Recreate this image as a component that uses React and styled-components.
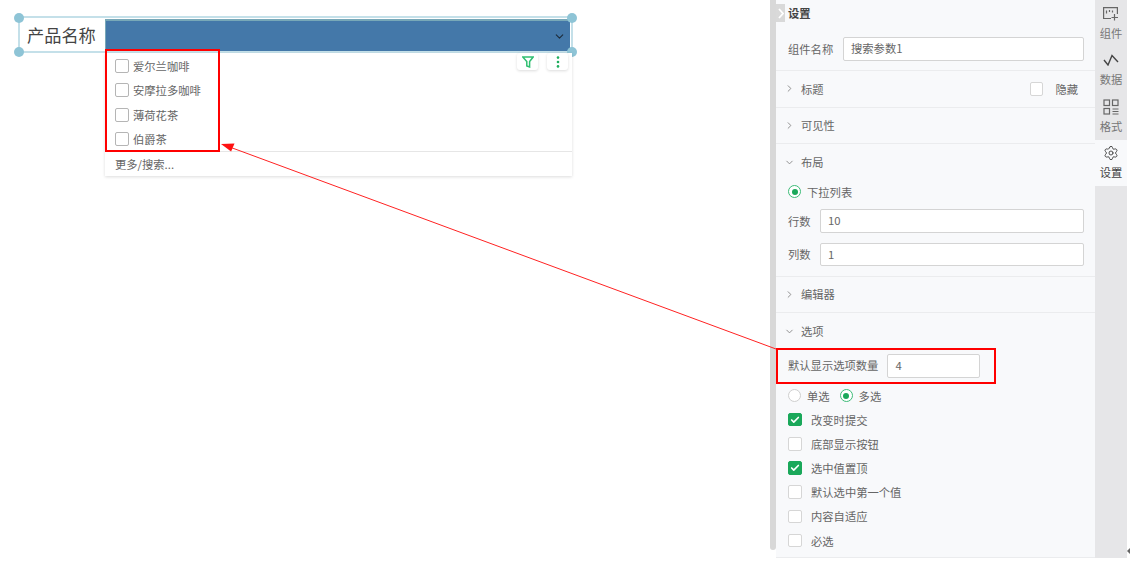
import React from "react";
import styled, { createGlobalStyle } from "styled-components";
import { Check, ChevronDown, ChevronRight, Settings } from "lucide-react";

const options = ["爱尔兰咖啡", "安摩拉多咖啡", "薄荷花茶", "伯爵茶"];

const checks = [
    { label: "改变时提交", checked: true },
    { label: "底部显示按钮", checked: false },
    { label: "选中值置顶", checked: true },
    { label: "默认选中第一个值", checked: false },
    { label: "内容自适应", checked: false },
    { label: "必选", checked: false },
];

const App = () => {
    return (
        <Page>
            <GlobalStyle />
            <Canvas>
                <Frame>
                    <Handle $x="left" $y="top" />
                    <Handle $x="right" $y="top" />
                    <Handle $x="left" $y="bottom" />
                    <Handle $x="right" $y="bottom" />
                    <WidgetLabel>产品名称</WidgetLabel>
                    <SelectBar>
                        <ChevronDown size={13} strokeWidth={2} color="#1d2b3a" />
                    </SelectBar>
                </Frame>
                <Dropdown>
                    <FloatTools>
                        <ToolButton>
                            <svg width="12" height="12" viewBox="0 0 12 12" fill="none" stroke="#2fbf71" strokeWidth="1.5">
                                <path d="M.8 1h10.4L7.6 5.6V11L4.8 10V5.6L.8 1z" />
                            </svg>
                        </ToolButton>
                        <ToolButton>
                            <svg width="4" height="12" viewBox="0 0 4 12" fill="#1fae5e">
                                <circle cx="2" cy="1.6" r="1.3" />
                                <circle cx="2" cy="6" r="1.3" />
                                <circle cx="2" cy="10.4" r="1.3" />
                            </svg>
                        </ToolButton>
                    </FloatTools>
                    <OptionList>
                        {options.map((option) => (
                            <OptionRow key={option}>
                                <OptionBox />
                                {option}
                            </OptionRow>
                        ))}
                    </OptionList>
                    <MoreRow>更多/搜索...</MoreRow>
                </Dropdown>
            </Canvas>

            <Panel>
                <ScrollTrack />
                <PanelBody>
                    <CollapseTab>
                        <svg width="6" height="11" viewBox="0 0 6 11" fill="none" stroke="#fff" strokeWidth="1.8">
                            <path d="M1 1l4 4.5L1 10" />
                        </svg>
                    </CollapseTab>
                    <NameSection>
                        <PanelTitle>设置</PanelTitle>
                        <FieldRow>
                            <span>组件名称</span>
                            <TextBox $width="241px">搜索参数1</TextBox>
                        </FieldRow>
                    </NameSection>
                    <FoldRow>
                        <ChevronRight size={11} color="#888" />
                        <FoldLabel>标题</FoldLabel>
                        <HideCheck>
                            <CheckBox />
                            隐藏
                        </HideCheck>
                    </FoldRow>
                    <FoldRow>
                        <ChevronRight size={11} color="#888" />
                        <FoldLabel>可见性</FoldLabel>
                    </FoldRow>
                    <OpenSection $bottom="9.5px">
                        <OpenHeader>
                            <ChevronDown size={11} color="#888" />
                            <FoldLabel>布局</FoldLabel>
                        </OpenHeader>
                        <RadioRow>
                            <RadioItem>
                                <Radio $on />
                                下拉列表
                            </RadioItem>
                        </RadioRow>
                        <FieldStack>
                            <FieldRow>
                                <span>行数</span>
                                <TextBox $width="264px">10</TextBox>
                            </FieldRow>
                            <FieldRow>
                                <span>列数</span>
                                <TextBox $width="264px">1</TextBox>
                            </FieldRow>
                        </FieldStack>
                    </OpenSection>
                    <FoldRow>
                        <ChevronRight size={11} color="#888" />
                        <FoldLabel>编辑器</FoldLabel>
                    </FoldRow>
                    <OpenSection $bottom="4.5px">
                        <OpenHeader>
                            <ChevronDown size={11} color="#888" />
                            <FoldLabel>选项</FoldLabel>
                        </OpenHeader>
                        <CountRow>
                            <span>默认显示选项数量</span>
                            <TextBox $width="93px">4</TextBox>
                        </CountRow>
                        <RadioRow>
                            <RadioItem>
                                <Radio />
                                单选
                            </RadioItem>
                            <RadioItem>
                                <Radio $on />
                                多选
                            </RadioItem>
                        </RadioRow>
                        {checks.map((item) => (
                            <CheckRow key={item.label}>
                                <CheckBox $on={item.checked}>
                                    {item.checked && <Check size={10} strokeWidth={4} color="#fff" />}
                                </CheckBox>
                                {item.label}
                            </CheckRow>
                        ))}
                    </OpenSection>
                </PanelBody>
                <Rail>
                    <RailTab>
                        <RailIcon>
                            <svg width="16" height="14" viewBox="0 0 16 14" fill="none" stroke="#666" strokeWidth="1.2">
                                <path d="M8 11.5H.6V.6h13.8V7" />
                                <path d="M3.5 3.5v3M6.5 3v2M9.5 3.5v2" />
                                <path d="M11.5 7v6.5M8.5 10.5h6.5" />
                            </svg>
                        </RailIcon>
                        <span>组件</span>
                    </RailTab>
                    <RailTab>
                        <RailIcon>
                            <svg width="16" height="12" viewBox="0 0 16 12" fill="none" stroke="#444" strokeWidth="1.4">
                                <path d="M1 6l4 5L9 1.5 15 8" />
                            </svg>
                        </RailIcon>
                        <span>数据</span>
                    </RailTab>
                    <RailTab>
                        <RailIcon>
                            <svg width="16" height="16" viewBox="0 0 16 16" fill="none" stroke="#666" strokeWidth="1.2">
                                <rect x="1" y="1" width="5.5" height="5.5" />
                                <rect x="9.5" y="1" width="5.5" height="5.5" />
                                <rect x="1" y="9.5" width="5.5" height="5.5" />
                                <path d="M9.5 10h6M9.5 12.5h6M9.5 15h6" />
                            </svg>
                        </RailIcon>
                        <span>格式</span>
                    </RailTab>
                    <RailTab $active>
                        <RailIcon>
                            <Settings size={16} strokeWidth={1.4} color="#444" />
                        </RailIcon>
                        <span>设置</span>
                    </RailTab>
                </Rail>
            </Panel>

            <Callout $left="105px" $top="49px" $width="115px" $height="103px" />
            <Callout $left="776px" $top="348px" $width="220px" $height="36px" />
            <ArrowLayer width="1130" height="562" viewBox="0 0 1130 562">
                <path d="M776 349L231 147.5" stroke="#f22" strokeWidth="1" fill="none" />
                <path d="M221 144l13.5-.6-3.4 8.2z" fill="#f11" />
            </ArrowLayer>
            <CornerMark />
        </Page>
    );
};

export default App;

const GlobalStyle = createGlobalStyle`
    html, body {
        margin: 0;
        background: #fff;
    }
    body {
        font-family: "Noto Sans CJK SC", "Liberation Sans", sans-serif;
        font-size: 11.3px;
        color: #666;
    }
`;

const Page = styled.div`
    position: relative;
    display: flex;
    width: 1130px;
    height: 562px;
    overflow: hidden;
`;

const Canvas = styled.main`
    width: 770px;
    padding: 16px 0 0 18px;
    box-sizing: border-box;
`;

const Frame = styled.div`
    position: relative;
    display: flex;
    align-items: flex-end;
    width: 555px;
    height: 37px;
    box-sizing: border-box;
    border: 2px solid #c4e0e9;
`;

const Handle = styled.i`
    position: absolute;
    ${(p) => (p.$x === "left" ? "left: -6px;" : "right: -6px;")}
    ${(p) => (p.$y === "top" ? "top: -5px;" : "bottom: -6px;")}
    width: 10px;
    height: 10px;
    border-radius: 50%;
    background: #8ec4d6;
`;

const WidgetLabel = styled.div`
    align-self: center;
    width: 85px;
    padding-left: 7px;
    box-sizing: border-box;
    font-size: 17.2px;
    line-height: 30px;
    color: #444;
    white-space: nowrap;
`;

const SelectBar = styled.div`
    display: flex;
    align-items: center;
    justify-content: flex-end;
    flex: 1;
    height: 32px;
    margin-right: 1px;
    padding-right: 4px;
    box-sizing: border-box;
    background: #4478a9;
    border-top: 2px solid #78a8b8;
    border-left: 1px solid #78a8b8;
`;

const Dropdown = styled.div`
    position: relative;
    width: 467px;
    height: 123px;
    margin-left: 87px;
    display: flex;
    flex-direction: column;
    background: #fff;
    box-shadow: 0 1px 3px rgba(0, 0, 0, 0.14);
`;

const FloatTools = styled.div`
    position: absolute;
    top: 0;
    right: 4px;
    display: flex;
    gap: 9px;
`;

const ToolButton = styled.div`
    display: flex;
    align-items: center;
    justify-content: center;
    width: 21px;
    height: 17px;
    background: #fff;
    border-radius: 3px;
    box-shadow: 0 1px 3px rgba(0, 0, 0, 0.14);
`;

const OptionList = styled.div`
    display: flex;
    flex-direction: column;
    height: 99px;
    padding-top: 1px;
    box-sizing: border-box;
    border-bottom: 1px solid #e6e6e6;
`;

const OptionRow = styled.div`
    display: flex;
    align-items: center;
    gap: 4px;
    height: 24.3px;
    padding-left: 10px;
    color: #666;
`;

const OptionBox = styled.span`
    width: 14px;
    height: 14px;
    box-sizing: border-box;
    border: 1px solid #b5b5b5;
    border-radius: 2px;
    background: #fff;
`;

const MoreRow = styled.div`
    height: 24px;
    line-height: 25px;
    padding-left: 10px;
    color: #666;
`;

const Panel = styled.aside`
    display: flex;
    width: 357px;
    height: 562px;
`;

const ScrollTrack = styled.div`
    width: 6px;
    height: 550px;
    background: #d8d8d8;
    border-radius: 0 0 3px 3px;
`;

const PanelBody = styled.div`
    position: relative;
    width: 319px;
    height: 558px;
    background: #f8f9fb;
`;

const CollapseTab = styled.div`
    position: absolute;
    top: 4px;
    left: 0;
    display: flex;
    align-items: center;
    justify-content: center;
    width: 9px;
    height: 18px;
    background: #d9d9d9;
`;

const NameSection = styled.section`
    height: 70px;
    padding: 0 11px 0 12px;
    border-bottom: 1px solid #ebecee;
`;

const PanelTitle = styled.div`
    height: 37px;
    padding-top: 2px;
    box-sizing: border-box;
    line-height: 22px;
    font-weight: 700;
    color: #444;
`;

const FieldRow = styled.div`
    display: flex;
    align-items: center;
    justify-content: space-between;
    color: #666;
`;

const TextBox = styled.div`
    width: ${(p) => p.$width};
    height: 23.5px;
    padding-left: 7px;
    box-sizing: border-box;
    line-height: 20px;
    background: #fff;
    border: 1px solid #d4d4d4;
    border-radius: 2px;
    color: #666;
`;

const FoldRow = styled.section`
    display: flex;
    align-items: center;
    height: 35.5px;
    padding: 0 17px 0 8px;
    border-bottom: 1px solid #ebecee;
`;

const FoldLabel = styled.span`
    margin-left: 6px;
    color: #666;
`;

const HideCheck = styled.label`
    display: flex;
    align-items: center;
    gap: 12px;
    margin-left: auto;
    color: #666;
`;

const OpenSection = styled.section`
    padding-bottom: ${(p) => p.$bottom};
    border-bottom: 1px solid #ebecee;
`;

const OpenHeader = styled.div`
    display: flex;
    align-items: center;
    height: 36px;
    padding-left: 8px;
`;

const RadioRow = styled.div`
    display: flex;
    align-items: center;
    gap: 10px;
    height: 23.5px;
    padding-left: 12px;
`;

const RadioItem = styled.label`
    display: flex;
    align-items: center;
    gap: 6px;
    color: #666;
`;

const Radio = styled.span`
    position: relative;
    width: 13px;
    height: 13px;
    box-sizing: border-box;
    border-radius: 50%;
    background: #fff;
    border: 1px solid ${(p) => (p.$on ? "#3dbb78" : "#cfcfcf")};
    &::after {
        content: "";
        display: ${(p) => (p.$on ? "block" : "none")};
        position: absolute;
        inset: 2.5px;
        border-radius: 50%;
        background: #1aa85a;
    }
`;

const FieldStack = styled.div`
    display: flex;
    flex-direction: column;
    gap: 10px;
    padding: 5.5px 11px 0 12px;
`;

const CountRow = styled.div`
    display: flex;
    align-items: flex-start;
    gap: 9px;
    height: 35px;
    padding: 5px 0 0 12px;
    box-sizing: border-box;
    line-height: 23px;
`;

const CheckRow = styled.label`
    display: flex;
    align-items: center;
    gap: 9.5px;
    height: 24.2px;
    padding-left: 12px;
    color: #666;
`;

const CheckBox = styled.span`
    display: flex;
    align-items: center;
    justify-content: center;
    width: 13.5px;
    height: 13.5px;
    box-sizing: border-box;
    border-radius: 2px;
    background: ${(p) => (p.$on ? "#1aa85a" : "#fff")};
    border: 1px solid ${(p) => (p.$on ? "#1aa85a" : "#d6d6d6")};
`;

const Rail = styled.nav`
    display: flex;
    flex-direction: column;
    width: 32px;
    height: 558px;
    background: #e6e6e8;
`;

const RailTab = styled.div`
    display: flex;
    flex-direction: column;
    align-items: center;
    gap: 2.5px;
    height: 46.5px;
    padding-top: 5px;
    box-sizing: border-box;
    background: ${(p) => (p.$active ? "#f8f9fb" : "transparent")};
    color: ${(p) => (p.$active ? "#444" : "#777")};
    line-height: 17px;
`;

const RailIcon = styled.div`
    display: flex;
    align-items: center;
    justify-content: center;
    height: 17px;
`;

const Callout = styled.div`
    position: absolute;
    left: ${(p) => p.$left};
    top: ${(p) => p.$top};
    width: ${(p) => p.$width};
    height: ${(p) => p.$height};
    box-sizing: border-box;
    border: 2px solid #f00;
`;

const ArrowLayer = styled.svg`
    position: absolute;
    inset: 0;
    pointer-events: none;
`;

const CornerMark = styled.i`
    position: absolute;
    right: 0;
    bottom: 8px;
    border: 3px solid transparent;
    border-right-color: #666;
`;
